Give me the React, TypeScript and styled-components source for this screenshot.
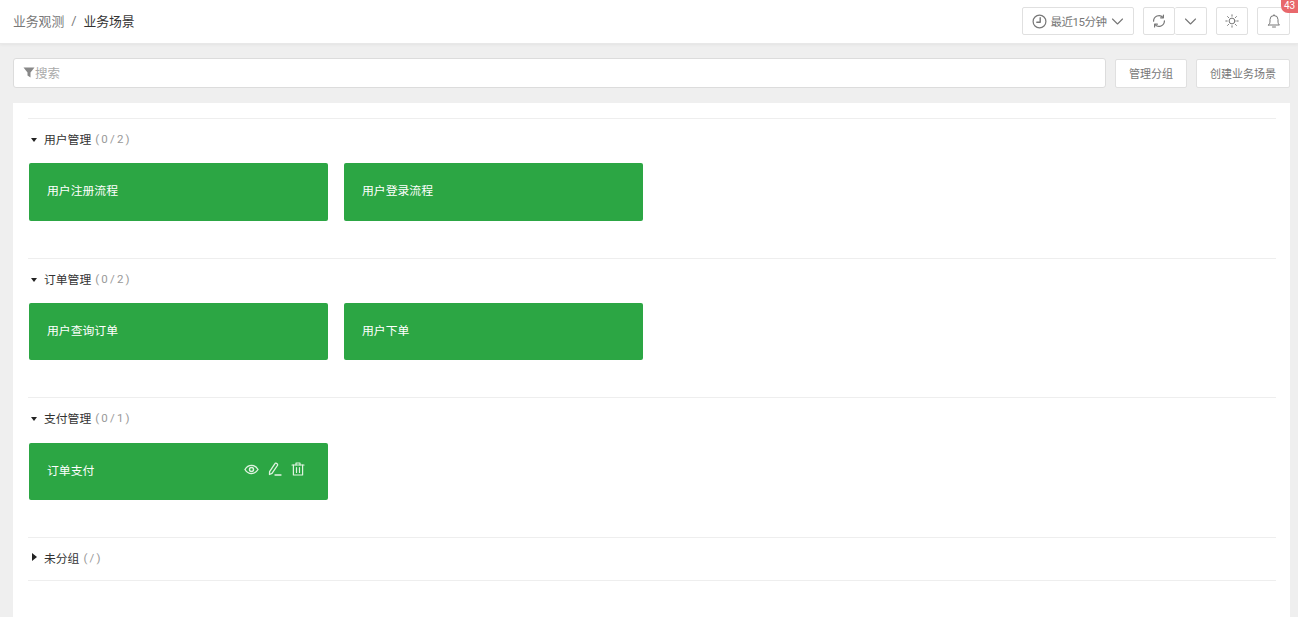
import { createGlobalStyle } from "styled-components";
import styled from "styled-components";

const GlobalStyle = createGlobalStyle`
  html, body {
    margin: 0;
    padding: 0;
    height: 100%;
    overflow: hidden;
    background: #efefef;
    font-family: "Roboto", "Noto Sans CJK SC", sans-serif;
    font-size: 12px;
    color: #333;
  }
  * { box-sizing: border-box; }
`;

const Page = styled.div`
  width: 1298px;
  height: 617px;
  display: flex;
  flex-direction: column;
  overflow: hidden;
`;

const Header = styled.header`
  height: 44px;
  flex: none;
  background: #fff;
  border-bottom: 1px solid #e8e8e8;
  box-shadow: 0 1px 3px rgba(0, 0, 0, 0.05);
  display: flex;
  align-items: center;
  justify-content: space-between;
  padding: 0 8px 0 13px;
`;

const Crumbs = styled.nav`
  display: flex;
  align-items: center;
  margin-top: -3px;
  font-size: 12.8px;
  color: #777;
`;

const CrumbSep = styled.span`
  margin: 0 7px;
`;

const CrumbCurrent = styled.span`
  color: #333;
`;

const Tools = styled.div`
  display: flex;
  align-items: center;
  margin-top: -1px;
`;

const ToolButton = styled.button<{ $gap?: number; $width: number }>`
  width: ${(p) => p.$width}px;
  height: 28px;
  margin-left: ${(p) => p.$gap ?? 0}px;
  display: flex;
  align-items: center;
  justify-content: center;
  padding: 0;
  background: #fff;
  border: 1px solid #e0e0e0;
  border-radius: 2px;
  color: #777;
  font: inherit;
  font-size: 11.5px;
  white-space: nowrap;
`;

const TimeLabel = styled.span`
  margin: 0 5px 0 4px;
  letter-spacing: -0.5px;
`;

const SplitRight = styled(ToolButton)`
  border-left: none;
`;

const BellWrap = styled.div`
  position: relative;
  margin-left: 9px;
`;

const Badge = styled.span`
  position: absolute;
  top: -7px;
  right: -8px;
  width: 17px;
  height: 13px;
  border-radius: 0 0 0 7px;
  background: #e8686c;
  color: #fff;
  font-size: 10px;
  line-height: 12px;
  text-align: center;
`;

const SearchRow = styled.div`
  flex: none;
  display: flex;
  align-items: center;
  padding: 14px 8px 15px 13px;
`;

const SearchBox = styled.div`
  flex: 1;
  height: 30px;
  display: flex;
  align-items: center;
  padding: 0 0 1px 9px;
  background: #fff;
  border: 1px solid #dcdcdc;
  border-radius: 3px;
  color: #aaa;
  font-size: 12.5px;
`;

const ActionButton = styled.button<{ $width: number; $gap: number }>`
  width: ${(p) => p.$width}px;
  height: 29px;
  margin-left: ${(p) => p.$gap}px;
  background: #fff;
  border: 1px solid #e0e0e0;
  border-radius: 2px;
  color: #777;
  font: inherit;
  font-size: 11px;
  padding: 0;
`;

const Panel = styled.main`
  flex: 1;
  margin: 0 8px 0 13px;
  padding: 15px 14px 0 15px;
  background: #fff;
`;

const Section = styled.section<{ $collapsed?: boolean }>`
  height: ${(p) => (p.$collapsed ? 44 : 139.67)}px;
  border-top: 1px solid #eeeeee;
  border-bottom: ${(p) => (p.$collapsed ? "1px solid #eeeeee" : "none")};
  padding: 11px 1px 0;
`;

const SectionTitle = styled.div`
  height: 17px;
  display: flex;
  align-items: center;
  font-size: 11.8px;
  color: #333;
`;

const Caret = styled.span<{ $open: boolean }>`
  width: 0;
  height: 0;
  margin-right: 7px;
  margin-left: ${(p) => (p.$open ? 2 : 3)}px;
  margin-top: 3px;
  border-style: solid;
  ${(p) =>
    p.$open
      ? `border-width: 4px 3.5px 0 3.5px;
         border-color: #222 transparent transparent transparent;`
      : `border-width: 4px 0 4px 5px;
         border-color: transparent transparent transparent #222;
         margin-top: 0;`}
`;

const Count = styled.span`
  margin-left: 4px;
  margin-top: 1px;
  color: #999;
  font-size: 11.5px;
  letter-spacing: 2.2px;
`;

const Cards = styled.div`
  display: flex;
  gap: 16px;
  margin-top: 16.3px;
`;

const Card = styled.div`
  width: 299px;
  height: 57.3px;
  display: flex;
  align-items: center;
  justify-content: space-between;
  padding: 0 23px 4px 18px;
  background: #2ca644;
  border-radius: 2px;
  color: #fff;
  font-size: 11.85px;
`;

const CardActions = styled.div`
  display: flex;
  align-items: center;
  gap: 9px;
  color: #dff3e0;
`;

const Icon = styled.svg.attrs({ fill: "none", stroke: "currentColor" })<{ $size: number }>`
  width: ${(p) => p.$size}px;
  height: ${(p) => p.$size}px;
  flex: none;
  stroke-linecap: round;
  stroke-linejoin: round;
`;

const ClockIcon = () => (
  <Icon $size={15} viewBox="0 0 15 15" strokeWidth={1.2}>
    <circle cx="7.5" cy="7.5" r="6.4" />
    <path d="M8.2 3.8V8.2H4.8" strokeWidth={1.4} />
  </Icon>
);

const Chevron = () => (
  <Icon $size={13} viewBox="0 0 13 13" strokeWidth={1.1}>
    <path d="M1.5 4L6.5 9L11.5 4" />
  </Icon>
);

const SyncIcon = () => (
  <Icon $size={14} viewBox="0 0 14 14" strokeWidth={1.2}>
    <path d="M1.6 7.2A5.4 5.4 0 0 1 11 3.4" />
    <path d="M11.4 1V3.8H8.6" />
    <path d="M12.4 6.8A5.4 5.4 0 0 1 3 10.6" />
    <path d="M2.6 13V10.2H5.4" />
  </Icon>
);

const SunIcon = () => (
  <Icon $size={14} viewBox="0 0 14 14" strokeWidth={1}>
    <circle cx="7" cy="7" r="2.9" />
    <path d="M7 .8V2.2M7 11.8V13.2M.8 7H2.2M11.8 7H13.2M2.6 2.6L3.6 3.6M10.4 10.4L11.4 11.4M2.6 11.4L3.6 10.4M10.4 3.6L11.4 2.6" />
  </Icon>
);

const BellIcon = () => (
  <Icon $size={14} viewBox="0 0 14 14" strokeWidth={1}>
    <path d="M1.5 11H12.5C11.2 10 11 8.8 11 7V5.5A4 4 0 0 0 3 5.5V7C3 8.8 2.8 10 1.5 11Z" />
    <path d="M5.5 13H8.5" />
    <path d="M7 .7V1.5" />
  </Icon>
);

const EyeIcon = () => (
  <Icon $size={15} viewBox="0 0 15 15" strokeWidth={1.4}>
    <path d="M1 7.5C2.6 4.8 4.8 3.4 7.5 3.4S12.4 4.8 14 7.5C12.4 10.2 10.2 11.6 7.5 11.6S2.6 10.2 1 7.5Z" />
    <circle cx="7.5" cy="7.5" r="2" />
  </Icon>
);

const PenIcon = () => (
  <Icon $size={14} viewBox="0 0 14 14" strokeWidth={1.3}>
    <path d="M1.5 12.5L1.6 9.6L6.8 1.8C7.2 1.1 7.9 1 8.5 1.4L9.1 1.8C9.7 2.2 9.8 2.9 9.4 3.5L4 11.4Z" />
    <path d="M7 13H13" />
  </Icon>
);

const TrashIcon = () => (
  <Icon $size={14} viewBox="0 0 14 14" strokeWidth={1.2}>
    <path d="M1 3H13" />
    <path d="M5 3V1H9V3" />
    <path d="M2.4 3V13H11.6V3" />
    <path d="M5.5 5.5V10.5M8.5 5.5V10.5" />
  </Icon>
);

type Group = {
  name: string;
  count: string;
  cards: string[];
};

const groups: Group[] = [
  { name: "用户管理", count: "(0/2)", cards: ["用户注册流程", "用户登录流程"] },
  { name: "订单管理", count: "(0/2)", cards: ["用户查询订单", "用户下单"] },
  { name: "支付管理", count: "(0/1)", cards: ["订单支付"] },
];

export default function App() {
  return (
    <Page>
      <GlobalStyle />
      <Header>
        <Crumbs>
          <span>业务观测</span>
          <CrumbSep>/</CrumbSep>
          <CrumbCurrent>业务场景</CrumbCurrent>
        </Crumbs>
        <Tools>
          <ToolButton $width={112}>
            <ClockIcon />
            <TimeLabel>最近15分钟</TimeLabel>
            <Chevron />
          </ToolButton>
          <ToolButton $width={32} $gap={9}>
            <SyncIcon />
          </ToolButton>
          <SplitRight $width={32}>
            <Chevron />
          </SplitRight>
          <ToolButton $width={32} $gap={9}>
            <SunIcon />
          </ToolButton>
          <BellWrap>
            <ToolButton $width={33}>
              <BellIcon />
            </ToolButton>
            <Badge>43</Badge>
          </BellWrap>
        </Tools>
      </Header>

      <SearchRow>
        <SearchBox>
          <svg width="12" height="11" viewBox="0 0 12 11">
            <path d="M0.5 0.5h11L7.5 5.5V10.5L4.5 8.5V5.5z" fill="#888" />
          </svg>
          搜索
        </SearchBox>
        <ActionButton $width={72} $gap={9}>管理分组</ActionButton>
        <ActionButton $width={94} $gap={9}>创建业务场景</ActionButton>
      </SearchRow>

      <Panel>
        {groups.map((group) => (
          <Section key={group.name}>
            <SectionTitle>
              <Caret $open />
              {group.name}
              <Count>{group.count}</Count>
            </SectionTitle>
            <Cards>
              {group.cards.map((card) => (
                <Card key={card}>
                  {card}
                  {card === "订单支付" && (
                    <CardActions>
                      <EyeIcon />
                      <PenIcon />
                      <TrashIcon />
                    </CardActions>
                  )}
                </Card>
              ))}
            </Cards>
          </Section>
        ))}
        <Section $collapsed>
          <SectionTitle>
            <Caret $open={false} />
            未分组
            <Count>(/)</Count>
          </SectionTitle>
        </Section>
      </Panel>
    </Page>
  );
}
